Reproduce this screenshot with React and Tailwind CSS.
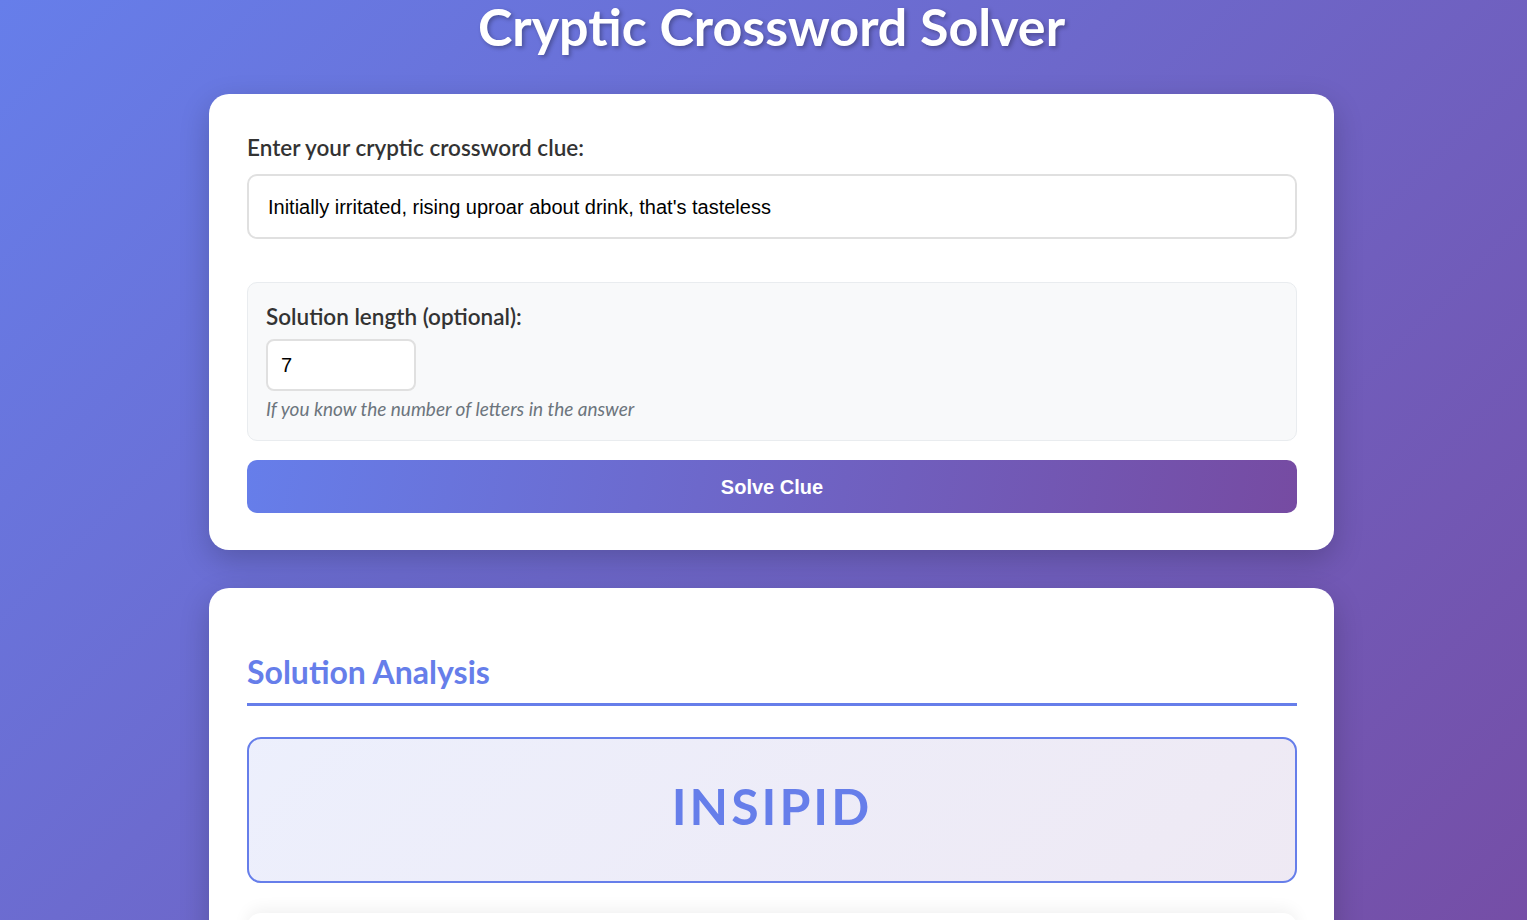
export default function App() {
  return (
    <div className="min-h-screen overflow-hidden bg-[linear-gradient(135deg,#667eea_0%,#764ba2_100%)] pl-[16px] font-['Lato',sans-serif]">
      <div className="mx-auto w-[1125px]">
        <h1 className="mt-[-6px] text-center text-[52px] font-bold leading-[64px] text-white [text-shadow:2px_2px_4px_rgba(0,0,0,0.3)]">
          Cryptic Crossword Solver
        </h1>

        <div className="mt-[36px] rounded-[20px] bg-white pb-[37px] pl-[38px] pr-[37px] pt-[40px] shadow-[0_10px_30px_rgba(0,0,0,0.2)]">
          <label className="block text-[22.5px] font-semibold leading-[28px] text-[#333]">
            Enter your cryptic crossword clue:
          </label>
          <div className="mt-[12px] flex h-[65px] items-center rounded-[10px] border-2 border-[#e0e0e0] px-[19px] font-['Liberation_Sans',sans-serif] text-[20px] text-black">
            Initially irritated, rising uproar about drink, that's tasteless
          </div>

          <div className="mt-[43px] rounded-[10px] border border-[#e9ecef] bg-[#f8f9fa] px-[18px] pb-[19px] pt-[20px]">
            <label className="block text-[22.5px] font-semibold leading-[28px] text-[#333]">
              Solution length (optional):
            </label>
            <div className="mt-[8px] flex h-[52px] w-[150px] items-center rounded-[8px] border-2 border-[#e0e0e0] bg-white px-[13px] font-['Liberation_Sans',sans-serif] text-[20px] text-black">
              7
            </div>
            <p className="mt-[6px] text-[19px] italic leading-[24px] text-[#6c757d]">
              If you know the number of letters in the answer
            </p>
          </div>

          <button className="mt-[19px] flex h-[53px] w-full items-center justify-center rounded-[10px] bg-[linear-gradient(100deg,#667eea_0%,#764ba2_100%)] font-['Liberation_Sans',sans-serif] text-[20px] font-bold text-white">
            Solve Clue
          </button>
        </div>

        <div className="mt-[38px] rounded-[20px] bg-white pb-[40px] pl-[38px] pr-[37px] pt-[64px] shadow-[0_10px_30px_rgba(0,0,0,0.2)]">
          <h2 className="border-b-[3px] border-[#667eea] pb-[11px] text-[32px] font-bold leading-[40px] text-[#667eea]">
            Solution Analysis
          </h2>
          <div className="mt-[31px] flex h-[146px] items-center justify-center rounded-[14px] border-2 border-[#667eea] bg-[linear-gradient(135deg,rgba(102,126,234,0.12),rgba(118,75,162,0.12))] pb-[8px]">
            <span className="text-[50px] font-bold tracking-[3px] text-[#667eea]">INSIPID</span>
          </div>
          <div className="mt-[30px] h-[120px] rounded-[14px] bg-white shadow-[0_-4px_16px_rgba(0,0,0,0.06)]"></div>
        </div>
      </div>
    </div>
  );
}
